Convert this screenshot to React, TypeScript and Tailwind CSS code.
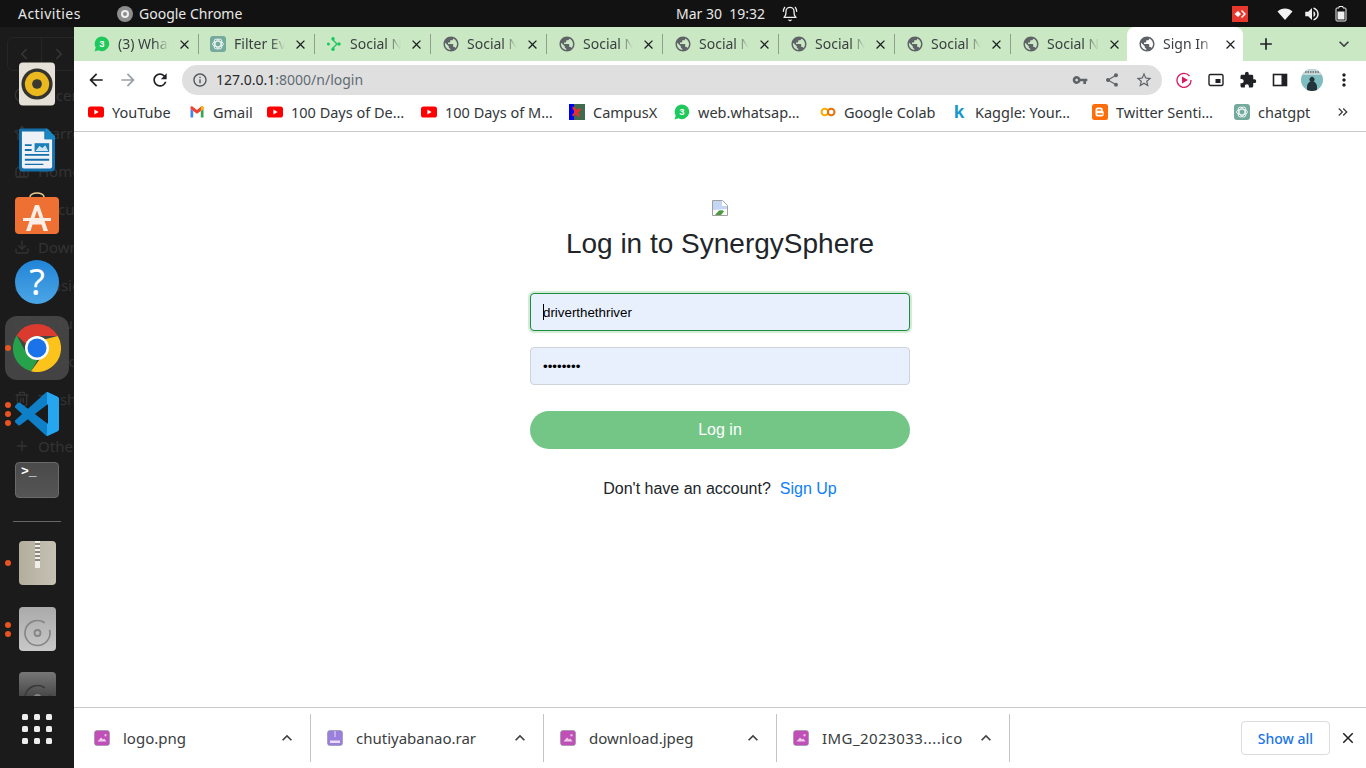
import {
  MdAdd,
  MdArrowBack,
  MdArrowForward,
  MdClose,
  MdExpandLess,
  MdExpandMore,
  MdExtension,
  MdInfoOutline,
  MdKeyboardDoubleArrowRight,
  MdMoreVert,
  MdPublic,
  MdRefresh,
  MdShare,
  MdStarBorder,
  MdVolumeUp,
  MdVpnKey,
} from 'react-icons/md';
import { LuBellRing } from 'react-icons/lu';
import {
  ChevronLeft,
  ChevronRight,
  Clock,
  Download as DownloadIcon,
  FileText,
  Home,
  Image,
  Music,
  Plus,
  Star,
  Trash2,
  Video,
} from 'lucide-react';

const uiFont = "[font-family:'Noto_Sans',sans-serif]";

function WhatsApp() {
  return (
    <svg viewBox="0 0 16 16" className="h-4 w-4 shrink-0">
      <path d="M8 .5a7.3 7.3 0 0 0-6.3 11L.6 15.4l4-1.1A7.3 7.3 0 1 0 8 .5z" fill="#1fc95b" />
      <circle cx="8" cy="7.8" r="5" fill="#1fc95b" />
      <text x="8" y="11.2" textAnchor="middle" fontSize="9.5" fontWeight="700" fill="#fff" fontFamily="Liberation Sans">3</text>
    </svg>
  );
}

function ChatGpt() {
  return (
    <svg viewBox="0 0 16 16" className="h-4 w-4 shrink-0">
      <rect width="16" height="16" rx="3" fill="#74aa9c" />
      <g fill="none" stroke="#e8f3f0" strokeWidth="1">
        <ellipse cx="8" cy="8" rx="5.4" ry="2.8" />
        <ellipse cx="8" cy="8" rx="5.4" ry="2.8" transform="rotate(60 8 8)" />
        <ellipse cx="8" cy="8" rx="5.4" ry="2.8" transform="rotate(120 8 8)" />
      </g>
    </svg>
  );
}

function SocialDots() {
  return (
    <svg viewBox="0 0 16 16" className="h-4 w-4 shrink-0">
      <path d="M6.5 3.5 11 8l-4.5 4.5" fill="none" stroke="#22c55e" strokeWidth="1.4" />
      <circle cx="7" cy="2.8" r="1.7" fill="#16c75e" />
      <circle cx="7" cy="13.2" r="1.7" fill="#16c75e" />
      <circle cx="13" cy="8" r="1.7" fill="#16c75e" />
      <circle cx="2.4" cy="8" r="1.5" fill="#16c75e" />
    </svg>
  );
}

function YouTube() {
  return (
    <svg viewBox="0 0 16 16" className="h-4 w-4 shrink-0">
      <rect y="2.5" width="16" height="11" rx="2.6" fill="#f00" />
      <path d="M6.4 5.6 10.6 8l-4.2 2.4z" fill="#fff" />
    </svg>
  );
}

function Gmail() {
  return (
    <svg viewBox="0 0 16 16" className="h-4 w-4 shrink-0">
      <path d="M1.5 13.5V5l2.7 2v6.5z" fill="#4285f4" />
      <path d="M11.8 13.5V7l2.7-2v8.5z" fill="#34a853" />
      <path d="M1.5 5V3.6c0-1 1.2-1.6 2-1L8 6l4-3.4c.8-.6 2.5 0 2.5 1V5l-2.7 2L8 9.8 4.2 7z" fill="#ea4335" />
      <path d="M11.8 7 14.5 5V3.6c0-1-1.7-1.6-2.5-1L11.8 3z" fill="#fbbc04" />
    </svg>
  );
}

function CampusX() {
  return (
    <svg viewBox="0 0 16 16" className="h-4 w-4 shrink-0">
      <rect width="16" height="16" fill="#3f6b4f" />
      <rect width="5" height="16" fill="#0000f0" />
      <path d="M3 3.5 5 2.5 8 6l3-2 1 2-3 2.5 2 3.5-2 1L7 10l-3 2.5L3 11l2.5-3z" fill="#ee2b30" />
    </svg>
  );
}

function Colab() {
  return (
    <svg viewBox="0 0 16 16" className="h-4 w-4 shrink-0">
      <circle cx="4.8" cy="8" r="3.3" fill="none" stroke="#f9ab00" strokeWidth="2" />
      <circle cx="11.2" cy="8" r="3.3" fill="none" stroke="#e8710a" strokeWidth="2" />
    </svg>
  );
}

function Blogger() {
  return (
    <svg viewBox="0 0 16 16" className="h-4 w-4 shrink-0">
      <rect width="16" height="16" rx="2.5" fill="#ff6d0a" />
      <path d="M5.5 3.5h3.2a2 2 0 0 1 2 2v1a1 1 0 0 0 1 1v3a2 2 0 0 1-2 2H5.500a2 2 0 0 1-2-2v-5a2 2 0 0 1 2-2z" fill="#fff" />
      <path d="M5.8 6h2.6M5.8 10h4.4" stroke="#ff6d0a" strokeWidth="1.3" strokeLinecap="round" />
    </svg>
  );
}

function Kaggle() {
  return <span className="w-4 shrink-0 text-center [font-family:'Liberation_Sans',sans-serif] text-[19px] leading-4 font-bold text-[#1b97cc]">k</span>;
}

function FileThumb({ archive = false }: { archive?: boolean }) {
  return (
    <svg viewBox="0 0 16 16" className="h-4 w-4 shrink-0">
      <rect x=".5" y=".5" width="15" height="15" rx="2.5" fill={archive ? '#9a7fdc' : '#c04fb8'} stroke="#8f8f9c" strokeWidth=".6" />
      {archive ? (
        <path d="M7.5 1h1v6h-1zM3 10.5h10V13H3z" fill="#e8defa" />
      ) : (
        <path d="M3.5 11.5 7 7.5l2 2 1.2-1 2.3 3zM10.500 4.200h2v2h-2z" fill="#eccdea" />
      )}
    </svg>
  );
}

function Tab({ icon, title, active = false, sep = true }: { icon: React.ReactNode; title: string; active?: boolean; sep?: boolean }) {
  return (
    <div className={`flex h-[34px] w-[116px] shrink-0 items-center pl-[11px] ${active ? 'rounded-t-lg bg-white' : ''}`}>
      {icon}
      <span className="ml-2 w-[53px] overflow-hidden text-[14px] leading-5 whitespace-nowrap text-[#3b3f42] [mask-image:linear-gradient(to_right,black_70%,transparent_98%)]">{title}</span>
      <MdClose className="ml-[7px] shrink-0 text-[#1f2124]" size={15} />
      {sep && <span className="ml-[6px] h-5 w-px shrink-0 bg-[#8e9f8b]" />}
    </div>
  );
}

function Bookmark({ icon, label, width, gap }: { icon: React.ReactNode; label: string; width: number; gap: number }) {
  return (
    <div className="flex shrink-0 items-center" style={{ marginRight: gap }}>
      {icon}
      <span className="ml-2 overflow-hidden text-[14.5px] leading-5 whitespace-nowrap text-[#33373a]" style={{ width }}>
        {label}
      </span>
    </div>
  );
}

function Download({ icon, name, first = false, width, wide = false }: { icon: React.ReactNode; name: string; first?: boolean; width: number; wide?: boolean }) {
  return (
    <div className={`flex h-12 shrink-0 items-center border-r border-[#c4c4c4] pr-[13px] ${first ? 'w-[237px] pl-5' : 'w-[233px] pl-[16px]'}`}>
      {icon}
      <span className={`ml-[13px] text-[15px] leading-5 whitespace-nowrap text-[#3a3d40] ${wide ? 'tracking-[0.45px]' : ''}`} style={{ width }}>
        {name}
      </span>
      <MdExpandLess className="ml-auto shrink-0 text-[#3c4043]" size={20} />
    </div>
  );
}

function DockSlot({ children, dots = 0, active = false }: { children: React.ReactNode; dots?: number; active?: boolean }) {
  return (
    <div className="relative flex h-[66px] w-full shrink-0 items-center justify-center">
      {active && <div className="absolute left-[5px] h-[64px] w-[64px] rounded-xl bg-[#4a4a4a]/85" />}
      {dots > 0 && (
        <div className="absolute left-[5px] flex flex-col gap-[3px]">
          {Array.from({ length: dots }).map((_, i) => (
            <span key={i} className="h-[6px] w-[6px] rounded-full bg-[#e95420]" />
          ))}
        </div>
      )}
      <div className="relative">{children}</div>
    </div>
  );
}

function Rhythmbox() {
  return (
    <svg viewBox="0 0 38 44" className="h-[44px] w-[37px]">
      <rect width="37" height="44" rx="4" fill="#e6e1d6" />
      <circle cx="18.5" cy="22" r="16" fill="#35332f" />
      <circle cx="18.5" cy="22" r="12.5" fill="#eab91f" />
      <circle cx="18.5" cy="22" r="5" fill="#3a3833" />
    </svg>
  );
}

function Writer() {
  return (
    <svg viewBox="0 0 38 44" className="h-[44px] w-[37px]">
      <path d="M2 0h25l10 10v30a4 4 0 0 1-4 4H4a4 4 0 0 1-4-4V2a2 2 0 0 1 2-2z" fill="#1470ab" />
      <path d="M3 3h23v8h8v28a2 2 0 0 1-2 2H5a2 2 0 0 1-2-2z" fill="#eef2f6" />
      <path d="M27 0h2l8 8v3h-10z" fill="#1b87c2" />
      <path d="M6 16h7v2H6zM6 21h7v2H6zM6 26h25v2H6zM6 31h25v2H6zM6 36h19v1.5H6z" fill="#1470ab" />
      <rect x="16" y="15" width="15" height="9" fill="#1b7fb8" />
      <path d="M17 23l4-5 3 2 3-3 3 6z" fill="#cfe4f2" />
    </svg>
  );
}

function AppStore() {
  return (
    <svg viewBox="0 0 44 44" className="h-[44px] w-[44px] -translate-y-[2px]">
      <path d="M15 7V5a7 4 0 0 1 14 0v2" fill="none" stroke="#efc992" strokeWidth="1.5" />
      <rect y="5" width="44" height="37" rx="4" fill="#ee7033" />
      <path d="M20 13h4l9 26h-4.5l-2-6.5h-9l-2 6.5H11z" fill="#fbeee6" />
      <path d="M8 26h28v3H8z" fill="#fbeee6" />
      <path d="M22 18.5l-2.500 7.500h5z" fill="#ee7033" />
    </svg>
  );
}

function Help() {
  return (
    <div className="flex h-[44px] w-[44px] items-center justify-center rounded-full bg-gradient-to-b from-[#1f84d6] to-[#4ba6e6] [font-family:'Noto_Sans',sans-serif] text-[36px] leading-none font-normal text-white">?</div>
  );
}

function Chrome() {
  return (
    <svg viewBox="0 0 48 48" className="h-[48px] w-[48px]">
      <path d="M24 0a24 24 0 0 1 20.8 12H24a12 12 0 0 0-11.2 7.8L3.6 11.2A24 24 0 0 1 24 0z" fill="#db3a2f" />
      <path d="M3.6 11.2 13.8 30a12 12 0 0 0 10.6 6L18 47.3A24 24 0 0 1 3.6 11.2z" fill="#26a24b" />
      <path d="M44.8 12A24 24 0 0 1 18 47.3L29 32a12 12 0 0 0 2-16.5z" fill="#fcc31a" />
      <circle cx="24" cy="24" r="12" fill="#fff" />
      <circle cx="24" cy="24" r="9.5" fill="#1a73e8" />
    </svg>
  );
}

function VsCode() {
  const logo =
    'M23.15 2.587L18.21.21a1.494 1.494 0 0 0-1.705.29l-9.46 8.63-4.12-3.128a.999.999 0 0 0-1.276.057L.327 7.261A1 1 0 0 0 .326 8.74L3.899 12 .326 15.26a1 1 0 0 0 .001 1.479L1.65 17.94a.999.999 0 0 0 1.276.057l4.12-3.128 9.46 8.63a1.492 1.492 0 0 0 1.704.29l4.942-2.377A1.5 1.5 0 0 0 24 20.06V3.939a1.5 1.5 0 0 0-.85-1.352zm-5.146 14.861L10.826 12l7.178-5.448v10.896z';
  return (
    <svg viewBox="0 0 24 24" className="h-[44px] w-[44px]">
      <defs>
        <clipPath id="codeRight">
          <rect x="17.5" width="7" height="24" />
        </clipPath>
      </defs>
      <path d={logo} fill="#0f7fc8" />
      <path d={logo} fill="#25a6ee" clipPath="url(#codeRight)" />
    </svg>
  );
}

function Terminal() {
  return (
    <div className="h-9 w-[44px] rounded-[4px] border border-[#6a6a6a] bg-gradient-to-b from-[#4a4a4a] to-[#555] pt-[2px] pl-[5px] [font-family:'Liberation_Mono',monospace] text-[13px] leading-[13px] font-bold text-white">
      {'>_'}
    </div>
  );
}

function Archive() {
  return (
    <div className="flex h-[44px] w-[37px] justify-center rounded-[4px] bg-gradient-to-r from-[#b3ad9d] to-[#c6c2b3]">
      <div className="flex h-[27px] w-[5px] flex-col justify-end bg-[repeating-linear-gradient(#eee_0_2px,#8c8878_2px_4px)]">
        <div className="h-[7px] bg-[#efeee8]" />
      </div>
    </div>
  );
}

function Disc({ dark = false }: { dark?: boolean }) {
  return (
    <svg viewBox="0 0 37 44" className="h-[44px] w-[37px]">
      <defs>
        <linearGradient id={dark ? 'discDark' : 'discLight'} x1="0" y1="0" x2="0" y2="1">
          <stop offset="0" stopColor={dark ? '#777' : '#aaa'} />
          <stop offset="1" stopColor={dark ? '#222' : '#c8c8c8'} />
        </linearGradient>
      </defs>
      <rect width="37" height="44" rx="4" fill={`url(#${dark ? 'discDark' : 'discLight'})`} />
      <path d="M25.67 15.76A12.5 12.5 0 1 0 30.57 22.76" fill="none" stroke={dark ? '#3a3a3a' : '#858585'} strokeWidth="1.6" />
      <circle cx="18.5" cy="26" r="3" fill="none" stroke="#858585" strokeWidth="1.8" />
    </svg>
  );
}

function Dock() {
  const ghost = [
    { label: 'Recent', Icon: Clock },
    { label: 'Starred', Icon: Star },
    { label: 'Home', Icon: Home },
    { label: 'Documents', Icon: FileText },
    { label: 'Downloads', Icon: DownloadIcon },
    { label: 'Music', Icon: Music },
    { label: 'Pictures', Icon: Image },
    { label: 'Videos', Icon: Video },
    { label: 'Trash', Icon: Trash2 },
  ];
  return (
    <aside className="relative h-full w-[74px] shrink-0 overflow-hidden bg-[#1b1b1b]">
      {/* Files window showing through the dock */}
      <div className="absolute inset-0 pt-[49px] pl-[14px] text-[15px] leading-[38px] whitespace-nowrap text-[#333]">
        {ghost.map(({ label, Icon }) => (
          <div key={label} className="flex items-center gap-2">
            <Icon className="shrink-0" size={16} />
            <span>{label}</span>
          </div>
        ))}
        <div className="mt-[9px] flex items-center gap-2">
          <Plus className="shrink-0" size={16} />
          <span>Other</span>
        </div>
      </div>
      <div className="absolute top-[10px] left-[7px] flex h-[34px] w-[80px] items-center rounded-md border border-[#262626] text-[#383838]">
        <ChevronLeft className="ml-[7px] shrink-0" size={18} />
        <span className="ml-[8px] h-full w-px shrink-0 bg-[#262626]" />
        <ChevronRight className="ml-[8px] shrink-0" size={18} />
      </div>

      <div className="relative flex h-full flex-col items-center pt-[24px]">
        <DockSlot><Rhythmbox /></DockSlot>
        <DockSlot><Writer /></DockSlot>
        <DockSlot><AppStore /></DockSlot>
        <DockSlot><Help /></DockSlot>
        <DockSlot dots={1} active><Chrome /></DockSlot>
        <DockSlot dots={3}><VsCode /></DockSlot>
        <DockSlot><Terminal /></DockSlot>
        <div className="my-[8px] h-px w-12 shrink-0 bg-[#666]" />
        <DockSlot dots={1}><Archive /></DockSlot>
        <DockSlot dots={2}><Disc /></DockSlot>
        <div className="mt-[10px] flex h-[24px] w-full shrink-0 justify-center overflow-hidden">
          <Disc dark />
        </div>
        <div className="mt-[18px] grid shrink-0 grid-cols-3 gap-[6px]">
          {Array.from({ length: 9 }).map((_, i) => (
            <span key={i} className="h-[6px] w-[6px] rounded-[1.5px] bg-[#eeeeee]" />
          ))}
        </div>
      </div>
    </aside>
  );
}

export default function App() {
  const socialTabs = [1, 2, 3, 4, 5, 6];
  return (
    <div className={`flex h-[768px] w-[1366px] flex-col overflow-hidden bg-white ${uiFont}`}>
      {/* GNOME top bar */}
      <div className="relative flex h-[27px] shrink-0 items-center bg-[#121212] text-[14px] text-[#e8e8e8]">
        <span className="ml-[18px] w-[63px] tracking-[0.45px]">Activities</span>
        <span className="ml-[36px] flex h-4 w-4 items-center justify-center rounded-full bg-[#8d8d8d]">
          <span className="h-[8px] w-[8px] rounded-full border-2 border-[#eee]" />
        </span>
        <span className="ml-[6px]">Google Chrome</span>
        <div className="absolute top-0 left-[676px] flex h-[27px] items-center">
          <span className="w-[93px] whitespace-nowrap">Mar 30&nbsp; 19:32</span>
          <LuBellRing className="ml-[13px] text-[#eee]" size={16} />
        </div>
        <div className="ml-auto flex items-center">
          <span className="flex h-4 w-4 items-center justify-center bg-[#e8382e]">
            <svg viewBox="0 0 16 16" className="h-4 w-4">
              <path d="M2.5 8 6 5l3 3-3 3zM9 5l1-1 4 4-4 4-1-1 3-3z" fill="#fff" />
            </svg>
          </span>
          <svg viewBox="0 0 16 16" className="ml-[29px] h-4 w-4">
            <path d="M.5 5.5C4.5 1.5 11.5 1.5 15.5 5.5L8 14z" fill="#f2f2f2" />
          </svg>
          <MdVolumeUp className="ml-[10px] text-[#eee]" size={18} />
          <svg viewBox="0 0 12 16" className="mr-[19px] ml-[14px] h-4 w-3">
            <path d="M4 .5h4V2h2a1 1 0 0 1 1 1v11a1 1 0 0 1-1 1H2a1 1 0 0 1-1-1V3a1 1 0 0 1 1-1h2z" fill="none" stroke="#eee" />
            <rect x="2.5" y="5.5" width="7" height="8" fill="#eee" />
          </svg>
        </div>
      </div>

      <div className="flex min-h-0 flex-1">
        <Dock />

        <div className="flex min-w-0 flex-1 flex-col">
          {/* Tab strip */}
          <div className="flex h-[34px] shrink-0 items-center bg-[#cbe8c4] pl-[9px]">
            <Tab icon={<WhatsApp />} title="(3) WhatsApp" />
            <Tab icon={<ChatGpt />} title="Filter Events" />
            <Tab icon={<SocialDots />} title="Social Network" />
            {socialTabs.map((n) => (
              <Tab key={n} icon={<MdPublic className="-mr-[1px] shrink-0 text-[#5f6368]" size={18} />} title="Social Network" sep={n !== 6} />
            ))}
            <Tab icon={<MdPublic className="-mr-[1px] shrink-0 text-[#5f6368]" size={18} />} title="Sign In | Network" active sep={false} />
            <MdAdd className="ml-[13px] shrink-0 text-[#1f2124]" size={20} />
            <MdExpandMore className="ml-[58px] shrink-0 text-[#3c4043]" size={20} />
          </div>

          {/* Toolbar */}
          <div className="flex h-[36px] shrink-0 items-center bg-white pt-[2px] pl-[12px]">
            <MdArrowBack className="text-[#1f2124]" size={20} />
            <MdArrowForward className="ml-[12px] text-[#9aa0a6]" size={20} />
            <MdRefresh className="ml-[12px] text-[#1f2124]" size={20} />
            <div className="ml-[12px] flex h-[30px] w-[980px] items-center rounded-full bg-[#dfdfdf] pr-[9px] pl-[10px]">
              <MdInfoOutline className="text-[#4f5356]" size={16} />
              <span className="ml-[8px] text-[14px] leading-5">
                <span className="text-[#26292c]">127.0.0.1</span>
                <span className="text-[#5f6b73]">:8000/n/login</span>
              </span>
              <div className="ml-auto flex items-center gap-[16px]">
                <MdVpnKey className="text-[#5f6368]" size={16} />
                <MdShare className="text-[#5f6368]" size={16} />
                <MdStarBorder className="-ml-[1px] text-[#5f6368]" size={18} />
              </div>
            </div>
            <svg viewBox="0 0 16 16" className="ml-[14px] h-4 w-4 shrink-0">
              <path d="M13.5 4A7 7 0 1 0 15 8" fill="none" stroke="#d81b60" strokeWidth="1.3" />
              <path d="M6 4.5 12 8l-6 3.5z" fill="#d81b60" />
            </svg>
            <svg viewBox="0 0 16 16" className="ml-[16px] h-4 w-4 shrink-0">
              <rect x="1" y="2.5" width="14" height="11" rx="1.5" fill="none" stroke="#1f2124" strokeWidth="1.4" />
              <rect x="7.5" y="7" width="5" height="4" fill="#1f2124" />
            </svg>
            <MdExtension className="ml-[15px] shrink-0 text-[#1f2124]" size={18} />
            <svg viewBox="0 0 16 16" className="ml-[15px] h-4 w-4 shrink-0">
              <rect x="1.5" y="2.5" width="13" height="11" fill="none" stroke="#1f2124" strokeWidth="1.6" />
              <rect x="9.5" y="2.5" width="5" height="11" fill="#1f2124" />
            </svg>
            <svg viewBox="0 0 22 22" className="ml-[13px] h-[22px] w-[22px] shrink-0">
              <defs>
                <clipPath id="avatarClip">
                  <circle cx="11" cy="11" r="11" />
                </clipPath>
              </defs>
              <g clipPath="url(#avatarClip)">
                <rect width="22" height="22" fill="#7fbcc0" />
                <rect width="22" height="6" fill="#c9d6d6" />
                <path d="M4 3h14" stroke="#5a6a70" strokeWidth="1.5" strokeDasharray="1.5 1" />
                <path d="M6 22v-5q1-4 3.5-4.5a2.5 2.5 0 1 1 3 0q2.5.5 3.5 4.5v5z" fill="#24343c" />
              </g>
            </svg>
            <MdMoreVert className="ml-[11px] shrink-0 text-[#1f2124]" size={20} />
          </div>

          {/* Bookmarks bar */}
          <div className="flex h-[35px] shrink-0 items-center border-b border-[#c9c9c9] bg-white pb-[4px] pl-[14px]">
            <Bookmark icon={<YouTube />} label="YouTube" width={60} gap={17} />
            <Bookmark icon={<Gmail />} label="Gmail" width={39} gap={15} />
            <Bookmark icon={<YouTube />} label="100 Days of De…" width={114} gap={16} />
            <Bookmark icon={<YouTube />} label="100 Days of M…" width={108} gap={16} />
            <Bookmark icon={<CampusX />} label="CampusX" width={65} gap={16} />
            <Bookmark icon={<WhatsApp />} label="web.whatsap…" width={106} gap={16} />
            <Bookmark icon={<Colab />} label="Google Colab" width={91} gap={16} />
            <Bookmark icon={<Kaggle />} label="Kaggle: Your…" width={101} gap={16} />
            <Bookmark icon={<Blogger />} label="Twitter Senti…" width={102} gap={16} />
            <Bookmark icon={<ChatGpt />} label="chatgpt" width={54} gap={23} />
            <MdKeyboardDoubleArrowRight className="shrink-0 text-[#3c4043]" size={16} />
          </div>

          {/* Page */}
          <main className="flex min-h-0 flex-1 flex-col items-center bg-white pt-[68px] [font-family:'Liberation_Sans',sans-serif]">
            <svg viewBox="0 0 16 16" className="h-4 w-4">
              <path d="M.5.5h10l5 5v10H.5z" fill="#fff" stroke="#a0a0a0" />
              <path d="M1 1h9v5h5v3L1 10z" fill="#c5d6f5" />
              <path d="M3 15 7 10.5q4-1 5 1L9 15z" fill="#4c9a3c" />
            </svg>
            <h1 className="mt-[11px] text-[28px] leading-[34px] font-normal text-[#212529]">Log in to SynergySphere</h1>

            <div className="mt-[32px] flex w-[380px] flex-col">
              <div className="relative">
                <input
                  readOnly
                  value="driverthethriver"
                  className="h-[38px] w-full rounded-[4px] border border-[#1e8a3c] bg-[#e8f0fe] px-[12px] text-[13.33px] text-black shadow-[0_0_0_2px_#d3ecd9] outline-none"
                />
                <span className="absolute top-[11px] left-[13px] h-[16px] w-px bg-black" />
              </div>
              <input
                readOnly
                type="password"
                value="password"
                className="mt-[16px] h-[38px] w-full rounded-[4px] border border-[#ced4da] bg-[#e8f0fe] px-[12px] text-[13.33px] text-black outline-none"
              />
              <button className="mt-[26px] h-[38px] w-full rounded-full bg-[#74c687] text-[16px] text-white">Log in</button>
              <p className="mt-[30px] text-center text-[16px] leading-[20px] text-[#212529]">
                Don't have an account?<a className="ml-[9px] text-[#0d7efb]">Sign Up</a>
              </p>
            </div>
          </main>

          {/* Downloads shelf */}
          <div className="flex h-[61px] shrink-0 items-center border-t border-[#c9c9c9] bg-white">
            <Download first icon={<FileThumb />} name="logo.png" width={66} />
            <Download icon={<FileThumb archive />} name="chutiyabanao.rar" width={120} />
            <Download icon={<FileThumb />} name="download.jpeg" width={106} />
            <Download wide icon={<FileThumb />} name="IMG_2023033....ico" width={140} />
            <button className="ml-auto h-[34px] w-[89px] rounded-[4px] border border-[#dadce0] text-[14px] font-medium text-[#1a73e8]">Show all</button>
            <MdClose className="mr-[9px] ml-[9px] text-[#1f2124]" size={18} />
          </div>
        </div>
      </div>
    </div>
  );
}
